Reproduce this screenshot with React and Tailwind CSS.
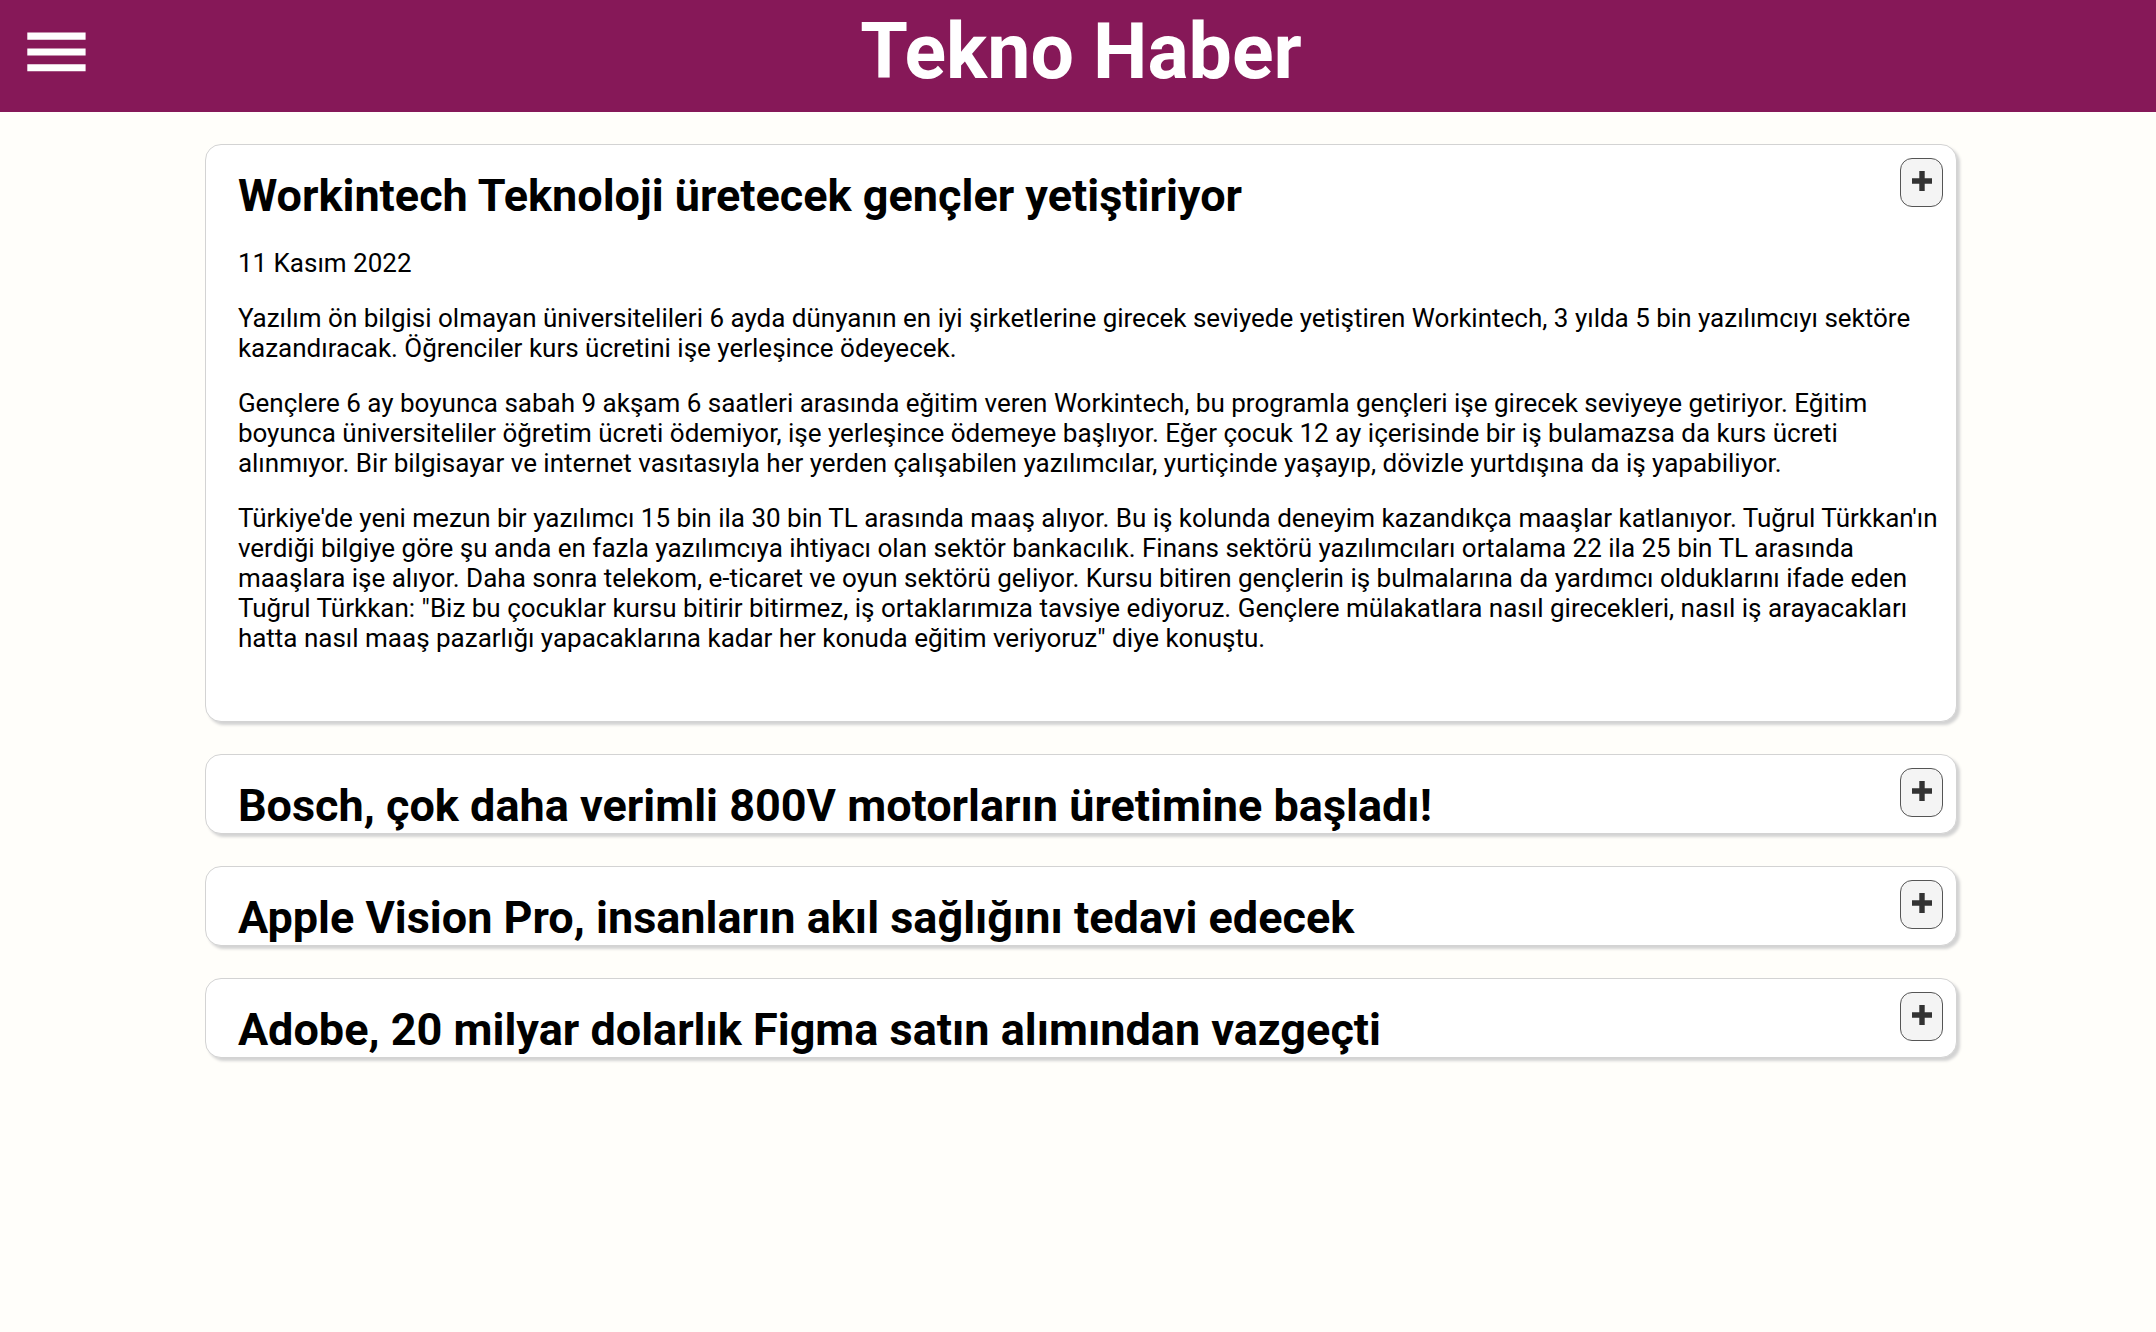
const articles = [
  {
    title: "Workintech Teknoloji üretecek gençler yetiştiriyor",
    date: "11 Kasım 2022",
    paragraphs: [
      "Yazılım ön bilgisi olmayan üniversitelileri 6 ayda dünyanın en iyi şirketlerine girecek seviyede yetiştiren Workintech, 3 yılda 5 bin yazılımcıyı sektöre kazandıracak. Öğrenciler kurs ücretini işe yerleşince ödeyecek.",
      "Gençlere 6 ay boyunca sabah 9 akşam 6 saatleri arasında eğitim veren Workintech, bu programla gençleri işe girecek seviyeye getiriyor. Eğitim boyunca üniversiteliler öğretim ücreti ödemiyor, işe yerleşince ödemeye başlıyor. Eğer çocuk 12 ay içerisinde bir iş bulamazsa da kurs ücreti alınmıyor. Bir bilgisayar ve internet vasıtasıyla her yerden çalışabilen yazılımcılar, yurtiçinde yaşayıp, dövizle yurtdışına da iş yapabiliyor.",
      "Türkiye'de yeni mezun bir yazılımcı 15 bin ila 30 bin TL arasında maaş alıyor. Bu iş kolunda deneyim kazandıkça maaşlar katlanıyor. Tuğrul Türkkan'ın verdiği bilgiye göre şu anda en fazla yazılımcıya ihtiyacı olan sektör bankacılık. Finans sektörü yazılımcıları ortalama 22 ila 25 bin TL arasında maaşlara işe alıyor. Daha sonra telekom, e-ticaret ve oyun sektörü geliyor. Kursu bitiren gençlerin iş bulmalarına da yardımcı olduklarını ifade eden Tuğrul Türkkan: \"Biz bu çocuklar kursu bitirir bitirmez, iş ortaklarımıza tavsiye ediyoruz. Gençlere mülakatlara nasıl girecekleri, nasıl iş arayacakları hatta nasıl maaş pazarlığı yapacaklarına kadar her konuda eğitim veriyoruz\" diye konuştu.",
    ],
  },
  { title: "Bosch, çok daha verimli 800V motorların üretimine başladı!" },
  { title: "Apple Vision Pro, insanların akıl sağlığını tedavi edecek" },
  { title: "Adobe, 20 milyar dolarlık Figma satın alımından vazgeçti" },
];

function Article({ title, date, paragraphs }) {
  return (
    <article
      className={`relative rounded-2xl border border-[#d3d3d3] bg-white pt-6 pr-4 pl-8 shadow-[3px_3px_3px_#d3d3d3] ${paragraphs ? "pb-[68px]" : ""}`}
    >
      <h2 className="text-[45px] leading-[54px] font-bold">{title}</h2>
      {date && <p className="mt-[25px] text-[26px] leading-[30px]">{date}</p>}
      {paragraphs?.map((text) => (
        <p key={text} className="mt-[25px] text-[26px] leading-[30px]">
          {text}
        </p>
      ))}
      <button
        type="button"
        aria-label={`${title}: aç`}
        className="absolute top-[13px] right-[13px] flex h-[49px] w-[43px] items-center justify-center rounded-xl border border-[#555] bg-[#f4f4f4] pb-[3px]"
      >
        <svg width="20" height="20" viewBox="0 0 20 20" fill="none" aria-hidden="true">
          <path d="M10 0v20M0 10h20" stroke="#333" strokeWidth="5.4" />
        </svg>
      </button>
    </article>
  );
}

export default function App() {
  return (
    <div className="min-h-screen bg-[#fffefa] font-[Roboto,sans-serif] text-black">
      <header className="relative flex h-28 items-start justify-center bg-[#861858] pl-1.5">
        <button type="button" aria-label="Menü" className="absolute top-8 left-[27px]">
          <svg width="59" height="40" viewBox="0 0 59 40" fill="#fff" aria-hidden="true">
            <path d="M.3.6h58.3v7.1H.3zM.3 16.4h58.3v7.1H.3zM.3 32.2h58.3v7.1H.3z" />
          </svg>
        </button>
        <h1 className="mt-[7px] text-[77px] leading-[90px] font-bold text-white">Tekno Haber</h1>
      </header>
      <div className="pt-8 pl-1.5">
        <main className="mx-auto flex w-[81.5%] flex-col gap-8">
          {articles.map((article) => (
            <Article key={article.title} {...article} />
          ))}
        </main>
      </div>
    </div>
  );
}
